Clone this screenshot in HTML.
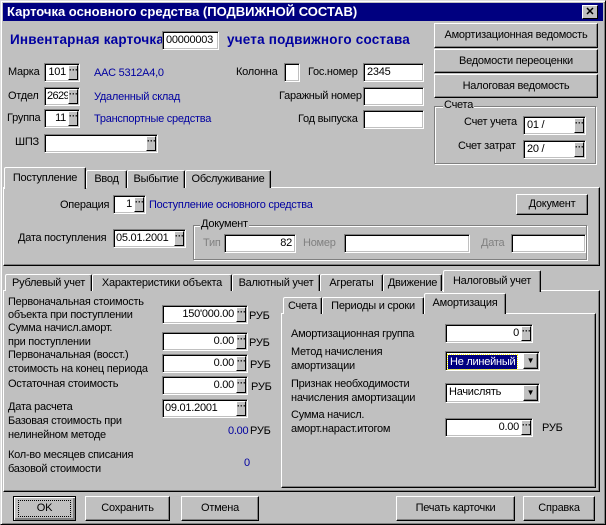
<!DOCTYPE html>
<html><head><meta charset="utf-8"><style>
*{box-sizing:border-box;margin:0;padding:0}
body{width:606px;height:525px;background:#c0c0c0;font-family:"Liberation Sans",sans-serif;font-size:11px;letter-spacing:-0.25px;color:#000;position:relative;overflow:hidden}
div,span{position:absolute;white-space:nowrap}
.win{left:0;top:0;width:606px;height:525px;border:1px solid #dfdfdf;border-right-color:#000;border-bottom-color:#000;box-shadow:inset 1px 1px #fff,inset -1px -1px #808080}
.title{left:3px;top:3px;width:600px;height:18px;background:#000080;color:#fff;font-weight:bold;font-size:13px;letter-spacing:0;line-height:18px;padding-left:4px}
.x{right:5px;top:2px;width:16px;height:14px;background:#c0c0c0;color:#000;font-size:11px;line-height:13px;text-align:center;border:1px solid #fff;border-right-color:#000;border-bottom-color:#000;padding:0}
.in{background:#fff;border:1px solid #808080;border-right-color:#fff;border-bottom-color:#fff;box-shadow:inset 1px 1px #000,inset -1px -1px #c0c0c0;line-height:17px;padding:0 3px;overflow:hidden}
.d{padding-right:13px}
.r{text-align:right}
.dots{top:1px;right:1px;width:10px;height:15px;background:#c0c0c0;border:1px solid #fff;border-right-color:#000;border-bottom-color:#000;font-size:9px;line-height:8px;text-align:center;font-weight:bold;padding:0;letter-spacing:0}
.btn{background:#c0c0c0;border:1px solid #fff;border-right-color:#000;border-bottom-color:#000;box-shadow:inset -1px -1px #808080;text-align:center}
.lbl{line-height:14px}
.blue{color:#0000a0}
.grp{border:1px solid #808080;box-shadow:1px 1px #fff,inset 1px 1px #fff}
.leg{background:#c0c0c0;padding:0 1px;line-height:12px}
.tab{border:1px solid #fff;border-bottom:none;border-right-color:#000;box-shadow:inset -1px 0 #808080;text-align:center;line-height:16px;background:#c0c0c0;border-radius:2px 2px 0 0}
.panel{border:1px solid #fff;border-right-color:#000;border-bottom-color:#000;box-shadow:inset -1px -1px #808080}
.gray{color:#808080}
.h{font-weight:bold;font-size:13.5px;color:#0000a0;letter-spacing:0.2px}
</style></head><body>
<div class="win"></div>
<div class="title">Карточка основного средства (ПОДВИЖНОЙ СОСТАВ)<div class="x">✕</div></div>

<div class="h" style="left:10px;top:32px">Инвентарная карточка</div>
<div class="in" style="left:162px;top:31px;width:57px;height:19px">00000003</div>
<div class="h" style="left:227px;top:32px">учета подвижного состава</div>

<div class="btn" style="left:434px;top:23px;width:164px;height:25px;line-height:23px">Амортизационная ведомость</div>
<div class="btn" style="left:434px;top:49px;width:164px;height:24px;line-height:22px">Ведомости переоценки</div>
<div class="btn" style="left:434px;top:74px;width:164px;height:24px;line-height:22px">Налоговая ведомость</div>
<div class="grp" style="left:434px;top:106px;width:162px;height:58px"></div>
<div class="leg" style="left:443px;top:99px">Счета</div>
<div class="lbl" style="left:464px;top:115px">Счет учета</div>
<div class="in d" style="left:523px;top:116px;width:63px;height:19px">01 /<div class="dots">···</div></div>
<div class="lbl" style="left:458px;top:139px">Счет затрат</div>
<div class="in d" style="left:523px;top:140px;width:63px;height:19px">20 /<div class="dots">···</div></div>

<div class="lbl" style="left:8px;top:65px">Марка</div>
<div class="in r d" style="left:44px;top:63px;width:36px;height:19px">101<div class="dots">···</div></div>
<div class="lbl blue" style="left:94px;top:66px">AAC 5312A4,0</div>
<div class="lbl" style="left:8px;top:89px">Отдел</div>
<div class="in d" style="left:44px;top:87px;width:36px;height:19px;padding-left:2px;letter-spacing:-0.6px">2629<div class="dots">···</div></div>
<div class="lbl blue" style="left:94px;top:90px">Удаленный склад</div>
<div class="lbl" style="left:7px;top:111px">Группа</div>
<div class="in r d" style="left:44px;top:109px;width:36px;height:19px">11<div class="dots">···</div></div>
<div class="lbl blue" style="left:94px;top:112px">Транспортные средства</div>
<div class="lbl" style="left:15px;top:135px">ШПЗ</div>
<div class="in" style="left:44px;top:134px;width:114px;height:19px"><div class="dots">···</div></div>

<div class="lbl" style="left:236px;top:65px">Колонна</div>
<div class="in" style="left:284px;top:63px;width:16px;height:19px"></div>
<div class="lbl" style="left:308px;top:65px">Гос.номер</div>
<div class="in" style="left:363px;top:63px;width:61px;height:19px">2345</div>
<div class="lbl" style="left:279px;top:89px">Гаражный номер</div>
<div class="in" style="left:363px;top:87px;width:61px;height:19px"></div>
<div class="lbl" style="left:298px;top:112px">Год выпуска</div>
<div class="in" style="left:363px;top:110px;width:61px;height:19px"></div>

<div class="panel" style="left:3px;top:187px;width:597px;height:79px"></div>
<div class="tab" style="left:86px;top:170px;width:41px;height:18px">Ввод</div>
<div class="tab" style="left:127px;top:170px;width:58px;height:18px">Выбытие</div>
<div class="tab" style="left:185px;top:170px;width:86px;height:18px">Обслуживание</div>
<div class="tab" style="left:4px;top:167px;width:82px;height:22px;line-height:20px">Поступление</div>
<div class="lbl" style="left:60px;top:198px">Операция</div>
<div class="in r d" style="left:113px;top:195px;width:33px;height:19px">1<div class="dots">···</div></div>
<div class="lbl blue" style="left:149px;top:198px">Поступление основного средства</div>
<div class="btn" style="left:516px;top:194px;width:72px;height:21px;line-height:19px">Документ</div>
<div class="lbl" style="left:18px;top:231px">Дата поступления</div>
<div class="in d" style="left:113px;top:229px;width:73px;height:19px;padding-left:2px">05.01.2001<div class="dots">···</div></div>
<div class="grp" style="left:193px;top:225px;width:394px;height:35px"></div>
<div class="leg" style="left:200px;top:218px">Документ</div>
<div class="lbl gray" style="left:203px;top:236px">Тип</div>
<div class="in r" style="left:224px;top:234px;width:72px;height:19px">82</div>
<div class="lbl gray" style="left:303px;top:236px">Номер</div>
<div class="in" style="left:344px;top:234px;width:126px;height:19px"></div>
<div class="lbl gray" style="left:481px;top:236px">Дата</div>
<div class="in" style="left:511px;top:234px;width:75px;height:19px"></div>

<div class="panel" style="left:3px;top:290px;width:597px;height:202px"></div>
<div class="tab" style="left:5px;top:274px;width:87px;height:17px">Рублевый учет</div>
<div class="tab" style="left:92px;top:274px;width:140px;height:17px">Характеристики объекта</div>
<div class="tab" style="left:232px;top:274px;width:88px;height:17px">Валютный учет</div>
<div class="tab" style="left:320px;top:274px;width:63px;height:17px">Агрегаты</div>
<div class="tab" style="left:383px;top:274px;width:59px;height:17px">Движение</div>
<div class="tab" style="left:443px;top:270px;width:98px;height:22px;line-height:20px">Налоговый учет</div>

<div class="lbl" style="left:8px;top:295px">Первоначальная стоимость</div>
<div class="lbl" style="left:8px;top:308px">объекта при поступлении</div>
<div class="in r d" style="left:162px;top:305px;width:86px;height:19px">150'000.00<div class="dots">···</div></div>
<div class="lbl" style="left:249px;top:309px">РУБ</div>
<div class="lbl" style="left:8px;top:321px">Сумма начисл.аморт.</div>
<div class="lbl" style="left:8px;top:335px">при поступлении</div>
<div class="in r d" style="left:162px;top:332px;width:86px;height:19px">0.00<div class="dots">···</div></div>
<div class="lbl" style="left:249px;top:336px">РУБ</div>
<div class="lbl" style="left:8px;top:348px">Первоначальная (восст.)</div>
<div class="lbl" style="left:8px;top:362px">стоимость на конец периода</div>
<div class="in r d" style="left:162px;top:354px;width:86px;height:19px">0.00<div class="dots">···</div></div>
<div class="lbl" style="left:250px;top:358px">РУБ</div>
<div class="lbl" style="left:8px;top:377px">Остаточная стоимость</div>
<div class="in r d" style="left:162px;top:376px;width:86px;height:19px">0.00<div class="dots">···</div></div>
<div class="lbl" style="left:251px;top:380px">РУБ</div>
<div class="lbl" style="left:8px;top:400px">Дата расчета</div>
<div class="in d" style="left:162px;top:399px;width:86px;height:19px;padding-left:2px">09.01.2001<div class="dots">···</div></div>
<div class="lbl" style="left:8px;top:414px">Базовая стоимость при</div>
<div class="lbl" style="left:8px;top:428px">нелинейном методе</div>
<div class="lbl blue" style="left:228px;top:424px">0.00</div>
<div class="lbl" style="left:250px;top:424px">РУБ</div>
<div class="lbl" style="left:8px;top:448px">Кол-во месяцев списания</div>
<div class="lbl" style="left:8px;top:462px">базовой стоимости</div>
<div class="lbl blue" style="left:244px;top:456px">0</div>

<div class="panel" style="left:281px;top:313px;width:315px;height:175px"></div>
<div class="tab" style="left:283px;top:297px;width:39px;height:17px">Счета</div>
<div class="tab" style="left:322px;top:297px;width:102px;height:17px">Периоды и сроки</div>
<div class="tab" style="left:424px;top:293px;width:82px;height:21px;line-height:18px">Амортизация</div>
<div class="lbl" style="left:291px;top:327px">Амортизационная группа</div>
<div class="in r d" style="left:445px;top:324px;width:88px;height:19px">0<div class="dots">···</div></div>
<div class="lbl" style="left:291px;top:345px">Метод начисления</div>
<div class="lbl" style="left:291px;top:359px">амортизации</div>
<div class="in" style="left:445px;top:351px;width:95px;height:20px;padding:2px"><span style="position:static;display:inline-block;background:#000080;color:#fff;line-height:14px;padding:0 2px;outline:1px dotted #ff0">Не линейный</span><div class="btn" style="right:1px;top:1px;width:15px;height:16px;font-size:8px;line-height:14px">▼</div></div>
<div class="lbl" style="left:291px;top:377px">Признак необходимости</div>
<div class="lbl" style="left:291px;top:391px">начисления амортизации</div>
<div class="in" style="left:445px;top:383px;width:95px;height:20px;line-height:17px">Начислять<div class="btn" style="right:1px;top:1px;width:15px;height:16px;font-size:8px;line-height:14px">▼</div></div>
<div class="lbl" style="left:291px;top:408px">Сумма начисл.</div>
<div class="lbl" style="left:291px;top:422px">аморт.нараст.итогом</div>
<div class="in r d" style="left:445px;top:418px;width:88px;height:19px">0.00<div class="dots">···</div></div>
<div class="lbl" style="left:542px;top:421px">РУБ</div>

<div class="btn" style="left:13px;top:496px;width:63px;height:25px;line-height:22px;border:1px solid #000;box-shadow:inset 1px 1px #fff,inset -2px -2px #808080"><span style="position:static;display:inline-block;outline:1px dotted #000;width:51px;line-height:15px;margin-top:3px">OK</span></div>
<div class="btn" style="left:85px;top:496px;width:85px;height:25px;line-height:23px">Сохранить</div>
<div class="btn" style="left:181px;top:496px;width:78px;height:25px;line-height:23px">Отмена</div>
<div class="btn" style="left:396px;top:496px;width:119px;height:25px;line-height:23px">Печать карточки</div>
<div class="btn" style="left:523px;top:496px;width:72px;height:25px;line-height:23px">Справка</div>
</body></html>
